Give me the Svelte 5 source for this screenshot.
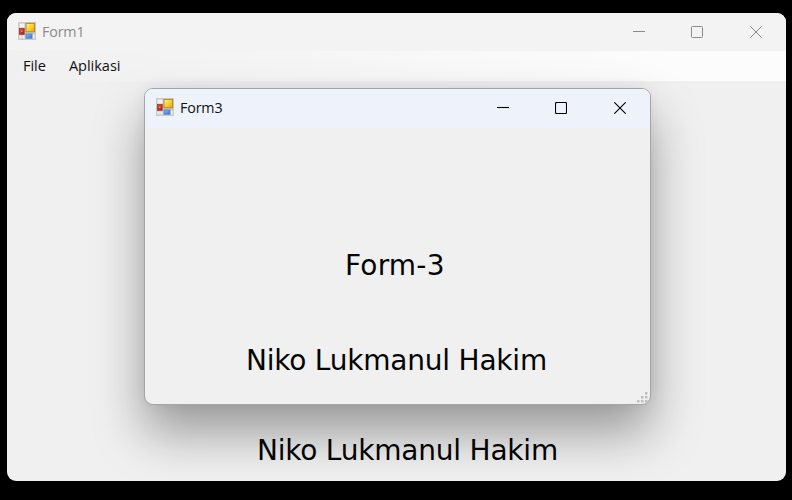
<script>
  const menus = ['File', 'Aplikasi'];
</script>

{#snippet appIcon()}
  <svg class="app-icon" width="18" height="18" viewBox="0 0 18 18">
    <defs>
      <linearGradient id="gold" x1="0" y1="0" x2="1" y2="1">
        <stop offset="0" stop-color="#fff0a0" />
        <stop offset=".5" stop-color="#fad032" />
        <stop offset="1" stop-color="#e5a900" />
      </linearGradient>
      <linearGradient id="red" x1="0" y1="0" x2="1" y2="1">
        <stop offset="0" stop-color="#e05a48" />
        <stop offset="1" stop-color="#a81712" />
      </linearGradient>
      <linearGradient id="blue" x1="0" y1="0" x2="1" y2="1">
        <stop offset="0" stop-color="#8dbdff" />
        <stop offset="1" stop-color="#3272df" />
      </linearGradient>
    </defs>
    <rect width="18" height="18" fill="#c9cac9" />
    <path d="M1.5 1.5h5v4h-5zM1.5 13.5h2v3h-2zM4.5 13.5h2v3h-2zM14.5 12.5h2v4h-2z" fill="#f0f1f3" />
    <rect x="8" y="1.4" width="8.6" height="8.4" fill="url(#gold)" stroke="#b58a20" />
    <rect x="1.4" y="6.5" width="4.8" height="5.8" fill="url(#red)" stroke="#a8322a" stroke-width=".8" />
    <rect x="3.2" y="8.6" width="1.2" height="1.4" fill="#eca090" />
    <rect x="8" y="12" width="6" height="4.2" fill="url(#blue)" stroke="#4a78c8" stroke-width=".8" />
  </svg>
{/snippet}

{#snippet controls()}
  <div class="controls">
    <svg width="12" height="12" viewBox="0 0 12 12"><path d="M0 5.5h12" /></svg>
    <svg width="12" height="12" viewBox="0 0 12 12"><rect x=".5" y=".5" width="11" height="11" rx="1" /></svg>
    <svg width="12" height="12" viewBox="0 0 12 12"><path d="M.3.3l11.4 11.4M11.7.3L.3 11.7" /></svg>
  </div>
{/snippet}

<div class="desktop">
  <main class="window main-window">
    <header class="titlebar">
      {@render appIcon()}
      <span class="title">Form1</span>
      {@render controls()}
    </header>
    <nav>
      {#each menus as menu}<span>{menu}</span>{/each}
    </nav>
    <div class="client"><p class="label">Niko Lukmanul Hakim</p></div>
  </main>

  <section class="window child-window">
    <header class="titlebar">
      {@render appIcon()}
      <span class="title">Form3</span>
      {@render controls()}
    </header>
    <div class="client">
      <p class="label heading">Form-3</p>
      <p class="label">Niko Lukmanul Hakim</p>
    </div>
    <svg class="grip" width="11" height="11" viewBox="0 0 11 11">
      <path d="M8 0h2.5v2.5H8zM4 4h2.5v2.5H4zM8 4h2.5v2.5H8zM0 8h2.5v2.5H0zM4 8h2.5v2.5H4zM8 8h2.5v2.5H8z" fill="#bfbfbf" />
    </svg>
  </section>
</div>

<style>
  .desktop {
    position: relative;
    width: 792px;
    height: 500px;
    overflow: hidden;
    background: #000;
    font-family: 'Open Sans', 'Noto Sans', sans-serif;
  }
  .window {
    position: absolute;
    box-sizing: border-box;
    display: flex;
    flex-direction: column;
    background: #f0f0f0;
  }
  .main-window {
    left: 7px;
    top: 13px;
    width: 779px;
    height: 468px;
    border-radius: 9px;
    overflow: hidden;
  }
  .child-window {
    left: 144px;
    top: 88px;
    width: 507px;
    height: 317px;
    border: 1px solid #a5a5a5;
    border-radius: 9px;
    box-shadow: 0 28px 50px rgba(0, 0, 0, 0.36), 0 0 14px rgba(0, 0, 0, 0.06);
  }
  .titlebar {
    display: flex;
    flex: none;
    align-items: center;
    box-sizing: border-box;
    height: 38px;
    padding: 0 24px 0 11px;
    background: #f3f3f3;
    color: #8b8b8b;
  }
  .child-window .titlebar {
    height: 39px;
    padding-bottom: 1px;
    background: #eef3fb;
    color: #111;
    border-radius: 8px 8px 0 0;
  }
  .app-icon {
    flex: none;
    position: relative;
    top: -1px;
  }
  .title {
    margin-left: 6px;
    font-size: 14.3px;
    line-height: 20px;
    letter-spacing: -0.15px;
  }
  .controls {
    display: flex;
    gap: 46px;
    margin-left: auto;
  }
  .controls svg {
    fill: none;
    stroke: #8a8a8a;
    stroke-width: 1;
  }
  .controls svg:last-child {
    margin-left: 1px;
  }
  .child-window .controls svg {
    stroke: #000;
    stroke-width: 1.1;
  }
  nav {
    display: flex;
    flex: none;
    gap: 23px;
    height: 30px;
    padding-left: 16px;
    background: linear-gradient(90deg, #f0f0f0, #fcfcfc 85%);
    font-size: 14.6px;
    line-height: 28px;
    letter-spacing: -0.05px;
    color: #111;
  }
  .client {
    display: flex;
    flex: 1;
    flex-direction: column;
  }
  .label {
    margin: 0;
    font-family: 'DejaVu Sans', sans-serif;
    font-size: 28px;
    line-height: 34px;
    letter-spacing: -0.22px;
    white-space: nowrap;
    color: #050505;
  }
  .main-window .label {
    margin: 353px 0 0 250px;
  }
  .child-window .label {
    margin: 61px 0 0 101px;
  }
  .child-window .heading {
    margin: 121px 0 0 200px;
    letter-spacing: 0.2px;
  }
  .grip {
    position: absolute;
    right: 2px;
    bottom: 1px;
  }
</style>
